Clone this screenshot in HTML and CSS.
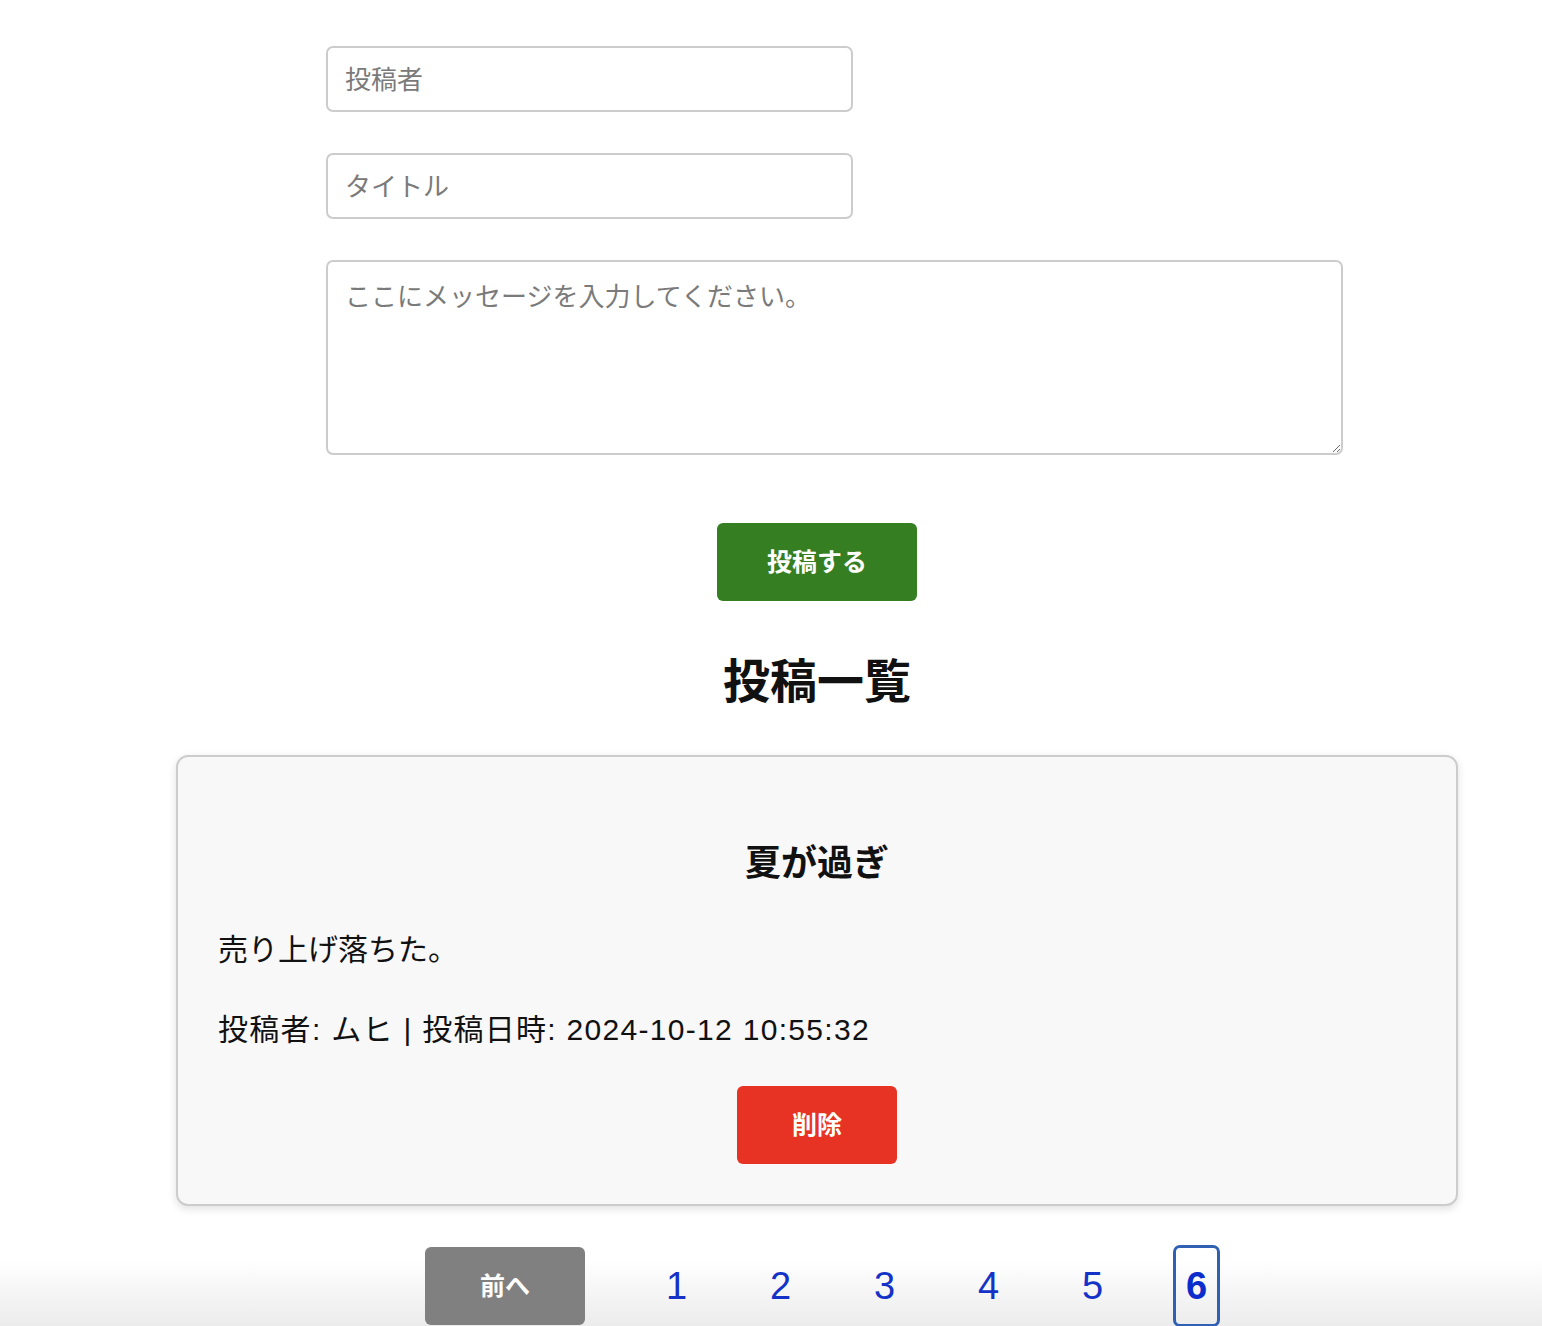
FILE: index.html
```html
<!DOCTYPE html>
<html lang="ja">
<head>
<meta charset="utf-8">
<title>掲示板</title>
<link rel="stylesheet" href="styles.css">
</head>
<body>
<main class="container">
  <form class="post-form">
    <input class="field field-short" type="text" placeholder="投稿者">
    <input class="field field-short" type="text" placeholder="タイトル">
    <textarea class="field field-area" placeholder="ここにメッセージを入力してください。"></textarea>
    <div class="form-actions">
      <button type="button" class="btn btn-post">投稿する</button>
    </div>
  </form>
  <h2 class="list-title">投稿一覧</h2>
  <article class="card">
    <h3 class="card-title">夏が過ぎ</h3>
    <p class="card-body">売り上げ落ちた。</p>
    <p class="card-meta">投稿者: ムヒ | 投稿日時: 2024-10-12 10:55:32</p>
    <div class="card-actions">
      <button type="button" class="btn btn-delete">削除</button>
    </div>
  </article>
</main>
<nav class="pager-bar">
  <div class="pager">
    <button type="button" class="btn btn-prev">前へ</button>
    <a class="page" href="#">1</a>
    <a class="page" href="#">2</a>
    <a class="page" href="#">3</a>
    <a class="page" href="#">4</a>
    <a class="page" href="#">5</a>
    <a class="page page-active" href="#">6</a>
  </div>
</nav>
</body>
</html>
```

FILE: styles.css
```css
html, body {
  margin: 0;
  padding: 0;
  background: #ffffff;
}

body {
  font-family: "Noto Sans CJK JP", "Noto Sans", sans-serif;
  color: #111111;
  overflow: hidden;
}

.container {
  margin-left: 176px;
  width: 1282px;
  padding-top: 46px;
}

.post-form {
  display: flex;
  flex-direction: column;
  align-items: flex-start;
  margin: 0;
}

.field {
  box-sizing: border-box;
  border: 2px solid #cccccc;
  border-radius: 7px;
  background: #ffffff;
  font-family: "Noto Sans CJK JP", "Noto Sans", sans-serif;
  font-size: 26px;
  color: #222222;
  padding: 0 17px;
  margin: 0 0 0 150px;
  outline: none;
}

.field::placeholder {
  color: #7a7a7a;
}

.field-short {
  width: 527px;
  height: 66px;
  padding-bottom: 4px;
  margin-bottom: 41px;
}

.field-area {
  width: 1017px;
  height: 195px;
  padding-top: 15px;
  line-height: 36px;
  resize: vertical;
}

.form-actions {
  align-self: stretch;
  display: flex;
  justify-content: center;
  margin-top: 68px;
}

.btn {
  border: none;
  border-radius: 6px;
  color: #ffffff;
  font-family: "Noto Sans CJK JP", "Noto Sans", sans-serif;
  font-size: 25px;
  font-weight: bold;
  height: 78px;
  padding: 0 0 4px;
  cursor: pointer;
}

.btn-post {
  width: 200px;
  background: #357e22;
}

.list-title {
  margin: 41px 0 41px;
  text-align: center;
  font-size: 47px;
  line-height: 72px;
  font-weight: bold;
  color: #111111;
}

.card {
  box-sizing: border-box;
  width: 1282px;
  border: 2px solid #cccccc;
  border-radius: 12px;
  background: #f8f8f8;
  padding: 40px 40px 40px;
  box-shadow: 0 3px 8px rgba(0, 0, 0, 0.12);
}

.card-title {
  margin: 36px 0 38px;
  text-align: center;
  font-size: 36px;
  line-height: 54px;
  font-weight: bold;
  color: #111111;
}

.card-body {
  margin: 0 0 37px;
  font-size: 30px;
  line-height: 45px;
  color: #111111;
}

.card-meta {
  margin: 0 0 34px;
  font-family: "Liberation Sans", "Noto Sans CJK JP", sans-serif;
  font-size: 30px;
  line-height: 45px;
  letter-spacing: 1.3px;
  color: #111111;
}

.card-actions {
  display: flex;
  justify-content: center;
}

.btn-delete {
  width: 160px;
  background: #e63323;
}

.pager-bar {
  margin-top: 39px;
  height: 100px;
  background: linear-gradient(to bottom, #ffffff 0%, #ffffff 15%, #e6e6e6 100%);
}

.pager {
  margin-left: 425px;
  display: flex;
  align-items: center;
  gap: 57px;
  height: 82px;
}

.btn-prev {
  width: 160px;
  background: #808080;
  margin-right: 11px;
}

.page {
  box-sizing: border-box;
  width: 47px;
  height: 82px;
  display: flex;
  align-items: center;
  justify-content: center;
  font-family: "Liberation Sans", Arial, sans-serif;
  font-size: 38px;
  color: #1432c8;
  text-decoration: none;
}

.page-active {
  font-weight: bold;
  border: 3px solid #2f60b4;
  border-radius: 7px;
  color: #0c2ccc;
}
```
